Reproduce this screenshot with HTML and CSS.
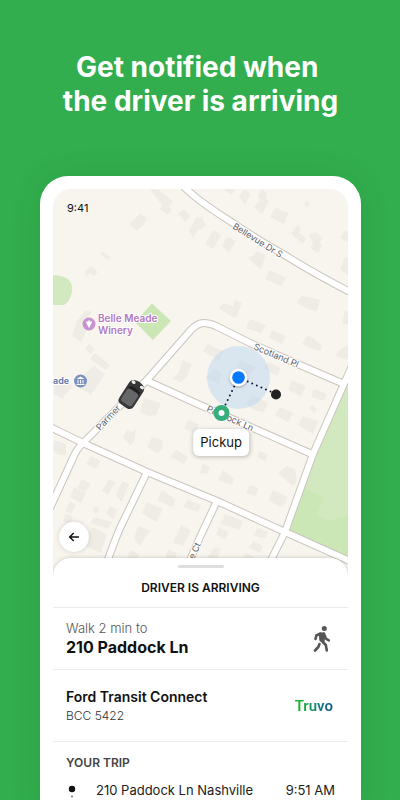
FILE: index.html
```html
<!DOCTYPE html>
<html lang="en">
<head>
<meta charset="utf-8">
<meta name="viewport" content="width=device-width, initial-scale=1">
<title>Driver is arriving</title>
<link rel="stylesheet" href="styles.css">
</head>
<body>
<main class="promo">
  <h1 class="headline">Get notified when&nbsp;<br>the driver is arriving</h1>
  <section class="phone">
    <div class="screen">
      <div class="map">
        <svg class="map-art" viewBox="53 189 295 387" role="img" aria-label="Map of the pickup area">
          <defs>
            <g id="roads">
              <path d="M181 184Q193 196 206 205Q220 215 233 223Q258 240 283 254Q315 274 352 293"/>
              <path d="M50 508L73 458Q76 450 83 443L117 409L147 380L190 331Q197 323 204 323Q209 323 216 326L250 343L300 365L344 384"/>
              <path d="M50 427L83 443L147 472L217 501L285 532L352 562"/>
              <path d="M145 380L200 405L253 428L314 455"/>
              <path d="M352 366L343 386L313 454L285 532L264 574"/>
              <path d="M147 472L122 524Q117 534 106 565"/>
              <path d="M217 501L200 537L183 576"/>
            </g>
          </defs>
          <path class="land" d="M53 189h295v387H53z"/>
          <path class="park" d="M350 380L343 388L313 456L285 532L350 561z"/>
          <path class="park-deep" d="M303 487L323 497L317 515Q324 521 333 520Q340 516 350 516V561L285 532z"/>
          <path class="park" d="M50 275Q63 275 69 280Q73 285 72 292Q70 302 64 305H50z"/>
          <path class="park-deep" d="M152 303.500L171 321L153 340L135 322z"/>
          <g class="building">
            <path d="M150 189l4-3 19 15-4 6 3 3-5 5-7-6 2-4zM178 214l6-5 6 7-5 6zM129 224l6-5 5-6 7 5-4 7-6 6zM189 231l7-13 6-1 3 8-8 6-4 7z"/>
            <path d="M100 254l3-3 7 6-2 3zM85 271l6-5 7 6-4 4-4-3-4 4zM222 189h13l-3 6zM239 197l5-8 7 5-6 10zM254 207l6-7-2-4 4-7 5 4-1 5 3 3-7 13z"/>
            <path d="M270 217l6-10 6 4 7 1-5 12-5-2zM291 234l6-9 4 3-2 5 7 5-3 6zM309 235l6-3 8 6-3 4 2 4-4 7-8-5 3-5zM304 204l2-3 4 2-2 4zM340 238l5-7 5 0v12zM340 269l5-12 5 2v18z"/>
            <path d="M205 244l8-14 8 5-8 14zM222 246l5-9 9 4-7 11zM248 258l6-3 2-4 10 4-5 14-6-4zM265 279l4-9 17 8-5 8zM196 220l4-1 6 6-5 4-5-2zM297 303l3-5 8-1 12 3-3 11-9-2zM219 308l5-5 9 3 2-6 7 3-6 15-7-3z"/>
            <path d="M77 321l9-11 6 2-6 8 3 6-8 16-9-7zM85 349l4-5 6 5-4 5zM90 359l5-6 15 12-4 5zM75 382l19-16 11 8-6 9-8 12-15-9zM54 385l12-6 6 8-10 12-8-5zM172 378l6-4 5-14 9 4-6 14-6 4zM140 411l4-13 17 5-5 12-7 1-5-2zM109 318l4-7 6 2-4 8z"/>
            <path d="M297 302l5-6 18 4-6 11zM246 328l4-9 16 6-5 8zM268 338l4-8 14 6-4 8zM302 344l5-8 5 1 10 9-2 5-10-3zM335 356l6-7 7-4v15zM342 323l3-12h5v15zM203 351l5-7 15 7-4 10zM205 378l10-9 7 4-3 11zM264 369l4-7 13 6-4 8zM236 368l4-8 16 7-6 8zM288 390l4-10 14 6-5 10zM311 397l3-8 13 5-3 7zM247 403l5-8 16 8-4 9-12-2zM275 415l5-8 13 6-5 9zM309 408l3-3 5 4-3 4zM231 377l5-4 9 5-3 8z"/>
            <path d="M123 438l4-8 6 2 3-4-1 11-4 6zM147 447l5-10 10 3 1 8-6 5zM171 457l5-7 12 7-5 7zM184 428l5-8 10 4-4 10zM55 440l11 4 0 11-8 0-5-6zM86 464l5-8 10 5-5 8zM77 488l5-9 9 5-6 8zM70 497l4-10 12 6-5 10zM102 491l7-12 6 3-7 13zM116 496l6-15 7 3-7 18zM65 511l5-10 6 4-5 9zM92 510l4-4 4 4-4 4zM106 514l4-8 7 4-4 9zM90 523l4-6 18 5-4 7zM86 536l7-9 14 8-6 18-16-7zM63 521l3-8 7 4-3 8z"/>
            <path d="M157 500l5-10 14 10-4 7zM183 507l5-7 13 5-3 7zM142 513l5-11 16 7-7 13zM134 539l4-13 13 5-6 6-5 9zM173 543l8-18 10 5-8 16zM127 559l3-9 9 4-2 5zM165 559l3-10 9 4-2 6z"/>
            <path d="M200 473l3-10 7 5-3 6zM257 457l3-6 8 4-3 6zM218 480l5-10 11 8-2 7zM246 493l4-8 9 4-4 7zM278 474l5-5 4-3 8 3 2 13-4 4zM268 500l5-10 15 7-4 8-4 2zM221 524l4-10 18 7-4 9zM216 535l3-8 10 5-4 8zM253 535l5-7 10 4-3 7zM249 548l4-7 10 5-3 7zM242 558l4-5 9 4-2 3zM207 558l7-10 6 1-2 10zM298 425l5-9 15 5-5 13z"/>
          </g>
          <use href="#roads" class="road-edge"/>
          <use href="#roads" class="road"/>
          <g class="street">
            <text transform="translate(232 228) rotate(32)">Bellevue Dr S</text>
            <text transform="translate(253 349) rotate(23)">Scotland Pl</text>
            <text transform="translate(206 411) rotate(24)">Paddock Ln</text>
            <text transform="translate(100 431) rotate(-47)">Parmer</text>
            <text transform="translate(194 560) rotate(-66)">e Ct</text>
          </g>
          <g class="place">
            <text x="98" y="322">Belle Meade</text>
            <text x="98" y="334">Winery</text>
          </g>
          <circle cx="89" cy="324" r="6.500" fill="#c493d0"/>
          <path d="M85.800 321.500h6.400l-1.200 3-2 3.500-2-3.500zM88.500 320h1v1.500h-1z" fill="#fff"/>
          <text class="museum" x="53" y="384">ade</text>
          <circle cx="80.500" cy="381" r="6.500" fill="#7b91bf"/>
          <path d="M76.500 379l4-2.500 4 2.500zM77.500 380h1v3.500h-1zM80 380h1v3.500h-1zM82.500 380h1v3.500h-1zM76.500 384h8v1h-8z" fill="#fff"/>
          <circle cx="238.500" cy="377.500" r="31.500" fill="#9dc8f4" opacity=".32"/>
          <path class="walk" d="M238.500 377.500L276 394M238.500 377.500L221.500 413"/>
          <circle class="soft" cx="238.500" cy="377.500" r="9" fill="#fff"/>
          <circle cx="238.500" cy="377.500" r="6.300" fill="#067aff"/>
          <circle cx="276" cy="394.500" r="5" fill="#222"/>
          <circle cx="221.500" cy="413" r="5.500" fill="#fff" stroke="#35ae7c" stroke-width="5"/>
          <g class="car" transform="translate(131.500 394.500) rotate(33)">
            <path d="M-8.500-9Q-8.500-14 0-15Q8.500-14 8.500-9V9Q8.500 14 3 14H-3Q-8.500 14-8.500 9z" fill="#373738"/>
            <path d="M-6.500-6Q0-9 6.500-6L6-3H-6z" fill="#202021"/>
            <rect x="-6.500" y="-4" width="13" height="15" rx="3" fill="#666768"/>
            <ellipse cx="-5" cy="-11.500" rx="2.200" ry="1.500" fill="#f4f4ee"/>
            <ellipse cx="5" cy="-11.500" rx="2.200" ry="1.500" fill="#f4f4ee"/>
          </g>
        </svg>
        <time class="clock">9:41</time>
        <span class="pickup">Pickup</span>
        <button class="back" type="button" aria-label="Back">
          <svg viewBox="0 0 12 12" width="12" height="12"><path d="M11 6H2M5.700 2L1.700 6l4 4" fill="none" stroke="#111" stroke-width="1.500"/></svg>
        </button>
      </div>
      <div class="sheet">
        <div class="handle"></div>
        <h2 class="status">DRIVER IS ARRIVING</h2>
        <div class="row walk-row">
          <div>
            <p class="lead">Walk 2 min to</p>
            <p class="destination">210 Paddock Ln</p>
          </div>
          <svg class="walker" viewBox="0 0 18 28" width="18" height="28" aria-hidden="true">
            <circle cx="11.300" cy="3.400" r="2.500" fill="#555"/>
            <path d="M7 9L11 8.500 10.500 16 7.500 15z" fill="#555" stroke="#555" stroke-width="2.400" stroke-linejoin="round"/>
            <path d="M7.500 8.500L3.300 10.500 2.500 14M11 9l1.800 4.500 3 1.800M8.500 15.500l4.300 4.500 1 5.500M6.500 19L5.300 22 2 25.500" fill="none" stroke="#555" stroke-width="2.600" stroke-linecap="round" stroke-linejoin="round"/>
          </svg>
        </div>
        <div class="row car-row">
          <div>
            <p class="vehicle">Ford Transit Connect</p>
            <p class="plate">BCC 5422</p>
          </div>
          <span class="brand">Truvo</span>
        </div>
        <div class="trip">
          <h3 class="trip-title">YOUR TRIP</h3>
          <div class="stop">
            <svg class="stop-mark" viewBox="0 0 12 18" width="12" height="18" aria-hidden="true"><circle cx="6" cy="6" r="3.200" fill="#111"/><circle cx="6" cy="13.500" r="1" fill="#777"/></svg>
            <span class="stop-name">210 Paddock Ln Nashville</span>
            <time>9:51 AM</time>
          </div>
        </div>
      </div>
    </div>
  </section>
</main>
</body>
</html>
```
FILE: styles.css
```css
* { box-sizing: border-box; }
body {
  margin: 0;
  background: #32ae4e;
  color: #111;
  font-family: Inter, "Liberation Sans", sans-serif;
}
h1, h2, h3, p { margin: 0; }
.promo {
  display: flex;
  flex-direction: column;
  height: 100vh;
  padding: 50px 39px 0 40px;
  overflow: hidden;
}
.headline {
  color: #fff;
  font-size: 28px;
  font-weight: 700;
  line-height: 34px;
  text-align: center;
  white-space: nowrap;
}
.phone {
  flex: 1 0 auto;
  margin-top: 58px;
  padding: 13px 13px 0;
  background: #fff;
  border-radius: 28px 28px 0 0;
  box-shadow: 0 0 32px rgba(0, 60, 20, .1);
}
.screen {
  overflow: hidden;
  border-radius: 18px 18px 0 0;
}
.map { position: relative; }
.map-art {
  display: block;
  width: 100%;
  height: auto;
}
.land { fill: #f8f5ee; }
.park { fill: #d2e9c0; }
.park-deep { fill: #cbe7b5; }
.building { fill: #efece6; }
.road-edge, .road {
  fill: none;
  stroke-linejoin: round;
}
.road-edge { stroke: #cbc5bd; stroke-width: 8px; }
.road { stroke: #fff; stroke-width: 6px; }
.street, .place, .museum {
  font-family: Inter, sans-serif;
  stroke: #fff;
  stroke-width: 2px;
  stroke-linejoin: round;
  paint-order: stroke;
}
.street { font-size: 9px; fill: #5f6165; }
.place { font-size: 10px; font-weight: 600; fill: #b177c2; }
.museum { font-size: 9px; font-weight: 600; fill: #5c75ab; }
.walk {
  fill: none;
  stroke: #0e1c3c;
  stroke-width: 2px;
  stroke-linecap: round;
  stroke-dasharray: 0 5;
}
.soft { filter: drop-shadow(0 1px 1px rgba(0, 0, 0, .3)); }
.clock {
  position: absolute;
  top: 12px;
  left: 14px;
  font-size: 11px;
  line-height: 14px;
}
.pickup {
  position: absolute;
  top: 240px;
  left: 57%;
  padding: 4px 7px;
  border-radius: 6px;
  background: #fff;
  box-shadow: 0 1px 4px rgba(0, 0, 0, .25);
  font-size: 13px;
  line-height: 19px;
  transform: translateX(-50%);
}
.back {
  position: absolute;
  bottom: 24px;
  left: 6px;
  display: grid;
  place-items: center;
  width: 30px;
  height: 30px;
  padding: 0;
  border: 0;
  border-radius: 50%;
  background: #fff;
  box-shadow: 0 0 5px rgba(0, 0, 0, .15);
}
.sheet {
  position: relative;
  margin-top: -18px;
  padding-top: 7px;
  border-radius: 18px 18px 0 0;
  background: #fff;
  box-shadow: 0 0 4px rgba(0, 0, 0, .2);
}
.handle {
  width: 46px;
  height: 3px;
  margin: 0 auto;
  border-radius: 2px;
  background: #dedede;
}
.status {
  padding: 12px 0;
  font-size: 12px;
  font-weight: 600;
  line-height: 15px;
  text-align: center;
}
.row {
  display: flex;
  align-items: center;
  justify-content: space-between;
  padding: 0 15px 0 13px;
  border-top: 1px solid #ebebeb;
}
.walk-row { min-height: 62px; }
.car-row { min-height: 72px; }
.walker { margin-right: 2px; }
.lead { color: #555; font-size: 13px; font-weight: 300; line-height: 17px; }
.destination { font-size: 16px; font-weight: 700; line-height: 20px; }
.vehicle { font-size: 14px; font-weight: 600; line-height: 20px; }
.plate { color: #333; font-size: 12px; font-weight: 300; line-height: 17px; }
.brand {
  background: linear-gradient(90deg, #12b52c 15%, #168a72 50%, #11559a);
  background-clip: text;
  color: transparent;
  font-family: Roboto, sans-serif;
  font-size: 15px;
  font-weight: 600;
}
.trip {
  padding: 13px;
  border-top: 1px solid #ebebeb;
}
.trip-title {
  color: #444;
  font-size: 12px;
  font-weight: 600;
  line-height: 16px;
}
.stop {
  display: flex;
  align-items: flex-start;
  margin-top: 11px;
  color: #222;
  font-size: 13px;
  line-height: 16px;
}
.stop-mark { margin-top: 1px; }
.stop-name { flex: 1; margin-left: 18px; }
```
